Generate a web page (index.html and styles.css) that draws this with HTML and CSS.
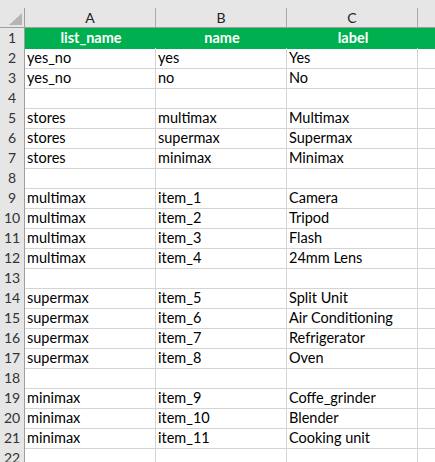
FILE: index.html
```html
<!DOCTYPE html>
<html lang="en">
<head>
  <meta charset="UTF-8" />
  <title>choices</title>
  <link rel="stylesheet" href="styles.css">
</head>
<body>
  <div class="sheet">
    <!-- column letters -->
    <div class="col-heads">
      <div class="corner"><span class="tri"></span></div>
      <div class="col-head">A</div>
      <div class="col-head">B</div>
      <div class="col-head">C</div>
      <div class="col-head last"></div>
    </div>

    <div class="row top">
      <div class="num">1</div>
      <div class="cell th">list_name</div>
      <div class="cell th">name</div>
      <div class="cell th">label</div>
      <div class="cell"></div>
    </div>
    <div class="row"><div class="num">2</div><div class="cell">yes_no</div><div class="cell">yes</div><div class="cell">Yes</div><div class="cell"></div></div>
    <div class="row"><div class="num">3</div><div class="cell">yes_no</div><div class="cell">no</div><div class="cell">No</div><div class="cell"></div></div>
    <div class="row"><div class="num">4</div><div class="cell"></div><div class="cell"></div><div class="cell"></div><div class="cell"></div></div>
    <div class="row"><div class="num">5</div><div class="cell">stores</div><div class="cell">multimax</div><div class="cell">Multimax</div><div class="cell"></div></div>
    <div class="row"><div class="num">6</div><div class="cell">stores</div><div class="cell">supermax</div><div class="cell">Supermax</div><div class="cell"></div></div>
    <div class="row"><div class="num">7</div><div class="cell">stores</div><div class="cell">minimax</div><div class="cell">Minimax</div><div class="cell"></div></div>
    <div class="row"><div class="num">8</div><div class="cell"></div><div class="cell"></div><div class="cell"></div><div class="cell"></div></div>
    <div class="row"><div class="num">9</div><div class="cell">multimax</div><div class="cell">item_1</div><div class="cell">Camera</div><div class="cell"></div></div>
    <div class="row"><div class="num">10</div><div class="cell">multimax</div><div class="cell">item_2</div><div class="cell">Tripod</div><div class="cell"></div></div>
    <div class="row"><div class="num">11</div><div class="cell">multimax</div><div class="cell">item_3</div><div class="cell">Flash</div><div class="cell"></div></div>
    <div class="row"><div class="num">12</div><div class="cell">multimax</div><div class="cell">item_4</div><div class="cell">24mm Lens</div><div class="cell"></div></div>
    <div class="row"><div class="num">13</div><div class="cell"></div><div class="cell"></div><div class="cell"></div><div class="cell"></div></div>
    <div class="row"><div class="num">14</div><div class="cell">supermax</div><div class="cell">item_5</div><div class="cell">Split Unit</div><div class="cell"></div></div>
    <div class="row"><div class="num">15</div><div class="cell">supermax</div><div class="cell">item_6</div><div class="cell">Air Conditioning</div><div class="cell"></div></div>
    <div class="row"><div class="num">16</div><div class="cell">supermax</div><div class="cell">item_7</div><div class="cell">Refrigerator</div><div class="cell"></div></div>
    <div class="row"><div class="num">17</div><div class="cell">supermax</div><div class="cell">item_8</div><div class="cell">Oven</div><div class="cell"></div></div>
    <div class="row"><div class="num">18</div><div class="cell"></div><div class="cell"></div><div class="cell"></div><div class="cell"></div></div>
    <div class="row"><div class="num">19</div><div class="cell">minimax</div><div class="cell">item_9</div><div class="cell">Coffe_grinder</div><div class="cell"></div></div>
    <div class="row"><div class="num">20</div><div class="cell">minimax</div><div class="cell">item_10</div><div class="cell">Blender</div><div class="cell"></div></div>
    <div class="row"><div class="num">21</div><div class="cell">minimax</div><div class="cell">item_11</div><div class="cell">Cooking unit</div><div class="cell"></div></div>
    <div class="row"><div class="num">22</div><div class="cell"></div><div class="cell"></div><div class="cell"></div><div class="cell"></div></div>
  </div>
</body>
</html>
```
FILE: styles.css
```css
body { margin: 0; background: #fff; font-family: Lato, "Liberation Sans", sans-serif; font-size: 14.5px; color: #000; overflow: hidden; }
.sheet { width: 435px; height: 462px; overflow: hidden; }

.col-heads, .row { display: grid; grid-template-columns: 25px 131px 131px 131px 1fr; }
.col-heads { background: #e6e6e6; padding-top: 8px; border-bottom: 1px solid #9e9e9e; }
.corner, .col-head { height: 19px; border-right: 1px solid #ababab; box-sizing: border-box; }
.corner { position: relative; border-right-color: #9e9e9e; }
.tri { position: absolute; right: 2px; bottom: 2px; width: 0; height: 0; border-left: 13px solid transparent; border-bottom: 12px solid #b5b5b5; }
.col-head { text-align: center; line-height: 20px; font-size: 14px; color: #222; }
.col-head.last { border-right: none; }

.row { height: 20px; }
.num { background: #e6e6e6; border-right: 1px solid #9e9e9e; border-bottom: 1px solid #c8c8c8; text-align: center; font-size: 14px; color: #333; line-height: 20px; }
.cell { border-right: 1px solid #d4d4d4; border-bottom: 1px solid #d4d4d4; padding-left: 2px; line-height: 20px; white-space: nowrap; overflow: hidden; }
.row .cell:last-child { border-right: none; }
.top .cell { background: #00b050; border-color: #00b050; }
.th { color: #fff; font-weight: bold; text-align: center; }
```
